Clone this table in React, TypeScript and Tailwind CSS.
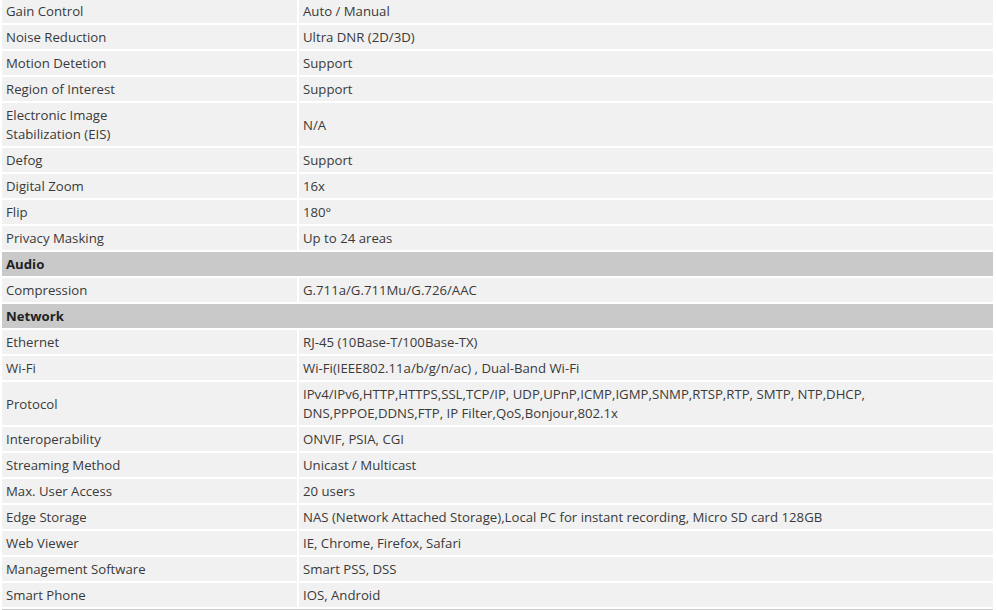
import React from "react";

type Row =
  | { kind: "header"; label: string }
  | { kind: "item"; label: React.ReactNode; value: React.ReactNode; tall?: boolean };

const rows: Row[] = [
  { kind: "item", label: "Gain Control", value: "Auto / Manual" },
  { kind: "item", label: "Noise Reduction", value: "Ultra DNR (2D/3D)" },
  { kind: "item", label: "Motion Detetion", value: "Support" },
  { kind: "item", label: "Region of Interest", value: "Support" },
  {
    kind: "item",
    label: (
      <>
        Electronic Image
        <br />
        Stabilization (EIS)
      </>
    ),
    value: "N/A",
    tall: true,
  },
  { kind: "item", label: "Defog", value: "Support" },
  { kind: "item", label: "Digital Zoom", value: "16x" },
  { kind: "item", label: "Flip", value: "180°" },
  { kind: "item", label: "Privacy Masking", value: "Up to 24 areas" },
  { kind: "header", label: "Audio" },
  { kind: "item", label: "Compression", value: "G.711a/G.711Mu/G.726/AAC" },
  { kind: "header", label: "Network" },
  { kind: "item", label: "Ethernet", value: "RJ-45 (10Base-T/100Base-TX)" },
  { kind: "item", label: "Wi-Fi", value: "Wi-Fi(IEEE802.11a/b/g/n/ac) , Dual-Band Wi-Fi" },
  {
    kind: "item",
    label: "Protocol",
    value: (
      <>
        IPv4/IPv6,HTTP,HTTPS,SSL,TCP/IP, UDP,UPnP,ICMP,IGMP,SNMP,RTSP,RTP, SMTP, NTP,DHCP,
        <br />
        DNS,PPPOE,DDNS,FTP, IP Filter,QoS,Bonjour,802.1x
      </>
    ),
    tall: true,
  },
  { kind: "item", label: "Interoperability", value: "ONVIF, PSIA, CGI" },
  { kind: "item", label: "Streaming Method", value: "Unicast / Multicast" },
  { kind: "item", label: "Max. User Access", value: "20 users" },
  {
    kind: "item",
    label: "Edge Storage",
    value: "NAS (Network Attached Storage),Local PC for instant recording, Micro SD card 128GB",
  },
  { kind: "item", label: "Web Viewer", value: "IE, Chrome, Firefox, Safari" },
  { kind: "item", label: "Management Software", value: "Smart PSS, DSS" },
  { kind: "item", label: "Smart Phone", value: "IOS, Android" },
  { kind: "header", label: "" },
];

export default function App() {
  return (
    <div
      className="w-[996px] h-[610px] overflow-hidden bg-white text-[13.2px] leading-[19px] text-[#3a3a3a]"
      style={{ fontFamily: '"Open Sans", "Liberation Sans", sans-serif' }}
    >
      <div className="-mt-px ml-[2px] w-[991px] flex flex-col gap-[2px]">
        {rows.map((row, i) =>
          row.kind === "header" ? (
            <div
              key={i}
              className="bg-[#c8c9c8] px-[4px] pt-[3px] pb-[2px] min-h-[24px] font-bold text-[#222]"
            >
              {row.label}
            </div>
          ) : (
            <div key={i} className="flex gap-[2px]">
              <div
                className={
                  "w-[295px] shrink-0 bg-[#f1f1f1] px-[4px] pt-[3px] pb-[2px] flex items-center" +
                  (row.tall ? " min-h-[43px]" : "")
                }
              >
                <span>{row.label}</span>
              </div>
              <div className="flex-1 bg-[#f1f1f1] px-[4px] pt-[3px] pb-[2px] flex items-center">
                <span>{row.value}</span>
              </div>
            </div>
          )
        )}
      </div>
    </div>
  );
}
